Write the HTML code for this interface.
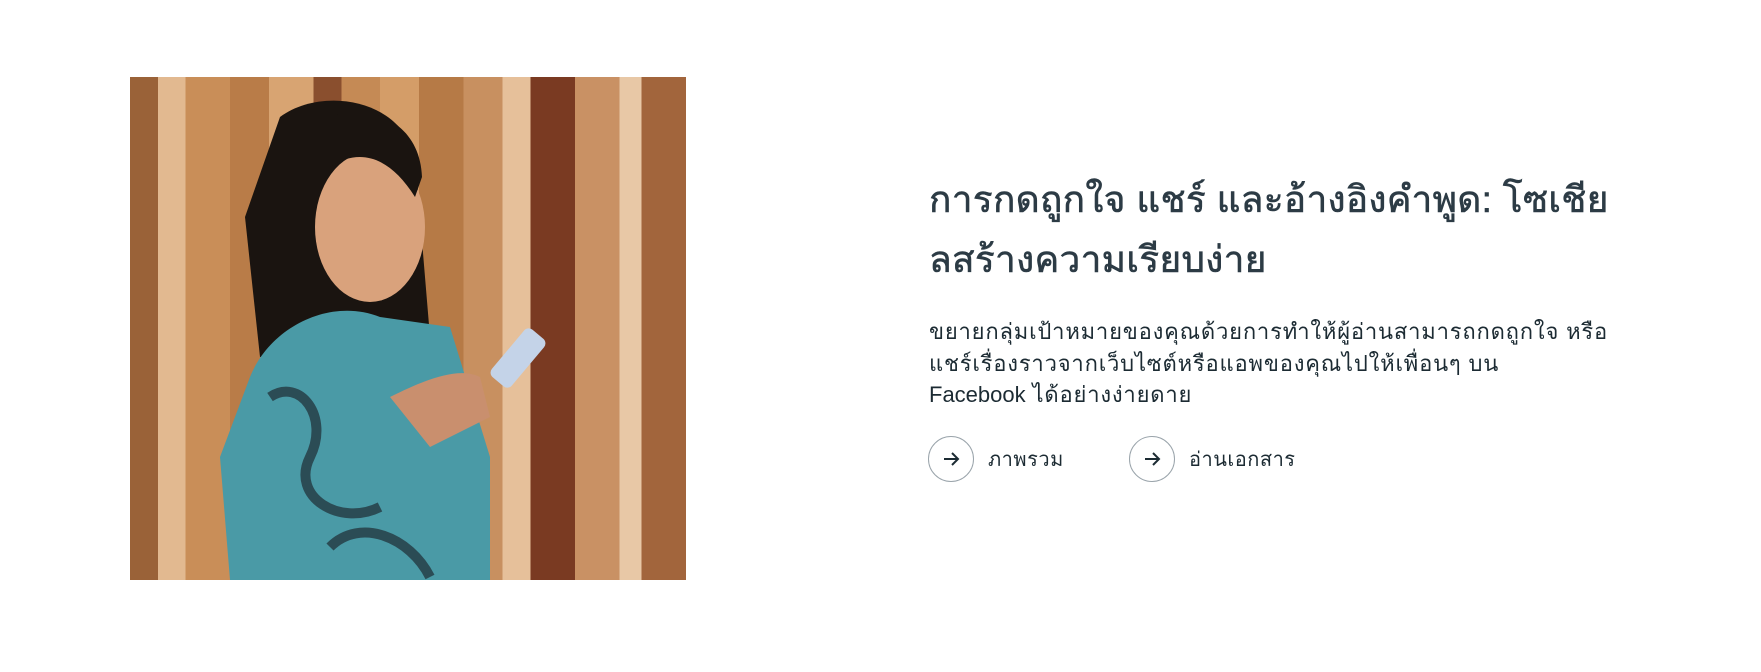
<!DOCTYPE html>
<html><head><meta charset="utf-8"><style>
body{margin:0;width:1761px;height:672px;background:#fff;position:relative;overflow:hidden;font-family:"Liberation Sans","Noto Sans CJK SC",sans-serif;color:#1c2b33}
.img{position:absolute;left:130px;top:77px;width:556px;height:503px;overflow:hidden;
background:linear-gradient(90deg,#9a6238 0 5%,#e2b990 5% 10%,#c98e58 10% 18%,#b97c48 18% 25%,#d8a472 25% 33%,#8a4f2e 33% 38%,#c58a55 38% 45%,#d49d68 45% 52%,#b67a46 52% 60%,#c89060 60% 67%,#e6c09a 67% 72%,#7a3a22 72% 80%,#c99164 80% 88%,#e8c8a6 88% 92%,#a2653c 92% 100%)}
h1{position:absolute;left:929px;top:170px;width:800px;margin:0;font-size:37px;font-weight:normal;-webkit-text-stroke:0.6px #2c3b45;letter-spacing:0.3px;line-height:60px;color:#2c3b45;white-space:nowrap}
p{position:absolute;left:929px;top:316px;width:800px;margin:0;font-size:22px;letter-spacing:0.8px;line-height:31.5px;color:#1c2b33;white-space:nowrap}
p span{letter-spacing:0}
.btn{position:absolute;top:436px;height:46px;display:flex;align-items:center;font-size:20px;letter-spacing:0.5px}
.c{width:44px;height:44px;border:1px solid #9aa4ab;border-radius:50%;display:flex;align-items:center;justify-content:center;margin-right:14px}
</style></head><body>
<div class="img">
<svg width="556" height="503" viewBox="0 0 556 503">
<path d="M150 40 C190 10 270 20 285 80 L300 260 L250 290 L130 280 L115 140 Z" fill="#1a1410"/>
<ellipse cx="240" cy="150" rx="55" ry="75" fill="#d9a27c"/>
<path d="M200 40 C240 25 290 45 292 100 L285 120 C260 80 230 70 200 90 Z" fill="#1a1410"/>
<path d="M120 300 C140 250 200 220 250 240 L320 250 L360 380 L360 503 L100 503 L90 380 Z" fill="#4a9aa6"/>
<path d="M140 320 C170 300 200 340 180 380 C160 420 210 450 250 430 M200 470 C230 440 280 460 300 500" stroke="#2b4c55" stroke-width="10" fill="none"/>
<path d="M260 320 C300 300 330 290 350 300 L360 340 L300 370 Z" fill="#c98f6e"/>
<rect x="375" y="250" width="26" height="62" rx="6" transform="rotate(40 388 281)" fill="#c4d3e8"/>
</svg>
</div>
<h1>การกดถูกใจ แชร์ และอ้างอิงคำพูด: โซเชีย<br>ลสร้างความเรียบง่าย</h1>
<p>ขยายกลุ่มเป้าหมายของคุณด้วยการทำให้ผู้อ่านสามารถกดถูกใจ หรือ<br>แชร์เรื่องราวจากเว็บไซต์หรือแอพของคุณไปให้เพื่อนๆ บน<br><span>Facebook</span> ได้อย่างง่ายดาย</p>
<div class="btn" style="left:928px"><div class="c"><svg width="20" height="20" viewBox="0 0 20 20"><path d="M3 10H17M11 4L17 10L11 16" stroke="#1c2b33" stroke-width="2" fill="none"/></svg></div>ภาพรวม</div>
<div class="btn" style="left:1129px"><div class="c"><svg width="20" height="20" viewBox="0 0 20 20"><path d="M3 10H17M11 4L17 10L11 16" stroke="#1c2b33" stroke-width="2" fill="none"/></svg></div>อ่านเอกสาร</div>
</body></html>
